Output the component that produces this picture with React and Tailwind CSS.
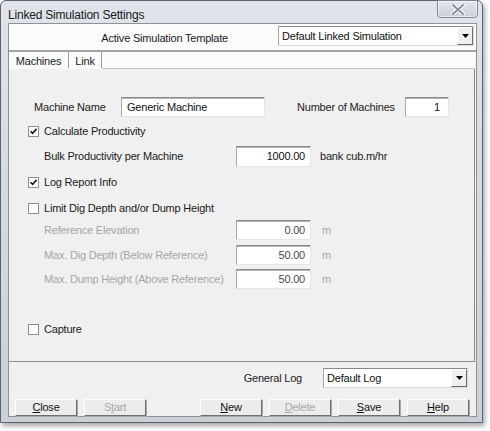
import React from "react";

const font = { fontFamily: '"Liberation Sans", Arial, sans-serif' };

function CheckBox({ checked, label }) {
  return (
    <div className="flex items-center h-full">
      <div className="w-[11px] h-[11px] bg-white border border-[#8e8f8f] flex items-center justify-center">
        {checked && (
          <svg width="7" height="7" viewBox="0 0 7 7">
            <path d="M0.5 3.2 L2.6 5.4 L6.5 0.8" fill="none" stroke="#111" strokeWidth="1.6" />
          </svg>
        )}
      </div>
      <span className="ml-[5px] text-[#1b1b1b]">{label}</span>
    </div>
  );
}

function Field({ value, w, h = 20, right, disabled, pad = 5 }) {
  return (
    <div
      className={`flex items-center bg-white border border-t-[#8a8a8a] border-l-[#a9a9a9] border-r-[#e6e6e6] border-b-[#e6e6e6] shadow-[inset_0_1px_0_#b4b4b4] ${
        right ? "justify-end" : "justify-start"
      } ${disabled ? "text-[#4a4a4a]" : "text-[#111]"}`}
      style={{ width: w, height: h, paddingLeft: pad, paddingRight: pad }}
    >
      {value}
    </div>
  );
}

function Combo({ value, w }) {
  return (
    <div
      className="flex items-center bg-white border border-t-[#8a8a8a] border-l-[#a9a9a9] border-r-[#dadada] border-b-[#dadada] h-[20px]"
      style={{ width: w }}
    >
      <span className="flex-1 pl-[3px] text-[#111]">{value}</span>
      <div className="w-[16px] h-[18px] bg-[#f0f0f0] border border-t-white border-l-white border-r-[#6d6d6d] border-b-[#6d6d6d] flex items-center justify-center">
        <svg width="7" height="4" viewBox="0 0 7 4">
          <path d="M0 0 H7 L3.5 4 Z" fill="#000" />
        </svg>
      </div>
    </div>
  );
}

function Btn({ children, disabled }) {
  return (
    <div
      className={`w-[62px] h-[17px] flex items-center justify-center bg-[#ececec] border border-t-white border-l-white border-r-[#6f6f6f] border-b-[#6f6f6f] shadow-[1px_1px_0_#a8a8a8] ${
        disabled ? "text-[#a8a8a8]" : "text-[#111]"
      }`}
    >
      {children}
    </div>
  );
}

export default function App() {
  return (
    <div className="w-[490px] h-[431px] bg-white text-[11px] tracking-[-0.2px] leading-none" style={font}>
      <div className="w-[483px] h-[423px] flex flex-col border border-[#5d6269] rounded-t-[6px] bg-gradient-to-b from-[#dfe4ea] to-[#c9d0d8] shadow-[2px_3px_5px_rgba(0,0,0,0.35)]">
        {/* title bar */}
        <div className="h-[24px] flex items-start justify-between">
          <span className="mt-[8px] ml-[7px] text-[#1a1a1a] text-[12px]">Linked Simulation Settings</span>
          <div className="w-[41px] h-[18px] mr-[4px] -mt-[1px] rounded-b-[4px] border border-[#7f8791] bg-gradient-to-b from-[#e3e7ec] to-[#c8cfd7] flex items-center justify-center shadow-[inset_0_0_0_1px_rgba(255,255,255,0.6)]">
            <svg width="14" height="11" viewBox="0 0 14 11">
              <path d="M2 1 L12 10 M12 1 L2 10" stroke="#ffffff" strokeWidth="4" strokeLinecap="round" />
              <path d="M2 1 L12 10 M12 1 L2 10" stroke="#8a9098" strokeWidth="2" strokeLinecap="round" />
            </svg>
          </div>
        </div>

        {/* client area */}
        <div className="flex-1 pl-[7px] pr-[5px] pb-[5px] flex">
          <div className="flex-1 flex flex-col border border-[#8c9298] bg-[#f0f0f0]">
            {/* template row */}
            <div className="h-[26px] flex items-start bg-[#fbfbfb]">
              <span className="w-[219px] mt-[9px] text-right text-[#1b1b1b]">Active Simulation Template</span>
              <div className="ml-[50px] mt-[2px]">
                <Combo value="Default Linked Simulation" w={196} />
              </div>
            </div>
            <div className="h-[2px] bg-[#a3a3a3]" />

            {/* tabs */}
            <div className="h-[17px] flex items-end bg-[#fbfbfb]">
              <div className="w-[60px] h-[16px] mb-[1px] pt-[3px] flex items-center justify-center border-r border-[#9c9c9c] text-[#1b1b1b]">
                Machines
              </div>
              <div className="w-[33px] h-[16px] mb-[1px] pt-[3px] flex items-center justify-center border-r border-[#9c9c9c] text-[#1b1b1b]">
                Link
              </div>
              <div className="flex-1 h-[1px] bg-[#c4c4c4] mr-[1px]" />
            </div>

            {/* panel */}
            <div className="h-[293px] mr-[1px] border-r border-b border-[#8d8d8d] bg-[#f0f0f0] flex flex-col pt-[28px]">
              <div className="h-[20px] flex items-center pl-[25px]">
                <span className="w-[87px] text-[#1b1b1b]">Machine Name</span>
                <Field value="Generic Machine" w={144} />
                <span className="ml-[32px] w-[108px] text-[#1b1b1b]">Number of Machines</span>
                <Field value="1" w={44} right pad={8} />
              </div>
              <div className="h-[29px] pl-[19px]">
                <CheckBox checked label="Calculate Productivity" />
              </div>
              <div className="h-[21px] flex items-center pl-[35px]">
                <span className="w-[192px] text-[#1b1b1b]">Bulk Productivity per Machine</span>
                <Field value="1000.00" w={75} h={21} right />
                <span className="ml-[9px] text-[#1b1b1b]">bank cub.m/hr</span>
              </div>
              <div className="h-[30px] pl-[19px]">
                <CheckBox checked label="Log Report Info" />
              </div>
              <div className="h-[23px] pl-[19px]">
                <CheckBox label="Limit Dig Depth and/or Dump Height" />
              </div>
              {[
                ["Reference Elevation", "0.00", 0],
                ["Max. Dig Depth (Below Reference)", "50.00", 5],
                ["Max. Dump Height (Above Reference)", "50.00", 4],
              ].map(([label, val, mt]) => (
                <div key={label} className="h-[20px] flex items-center pl-[35px]" style={{ marginTop: mt }}>
                  <span className="w-[192px] text-[#a6a6a6]">{label}</span>
                  <Field value={val} w={75} right disabled />
                  <span className="ml-[11px] text-[#a6a6a6]">m</span>
                </div>
              ))}
              <div className="h-[20px] mt-[30px] pl-[19px]">
                <CheckBox label="Capture" />
              </div>
            </div>

            {/* bottom */}
            <div className="flex items-center justify-end pt-[6px] pr-[8px]">
              <span className="text-[#1b1b1b]">General Log</span>
              <div className="ml-[21px]">
                <Combo value="Default Log" w={145} />
              </div>
            </div>
            <div className="flex items-center mt-[11px] pl-[6px]">
              <Btn>
                <span className="underline">C</span>lose
              </Btn>
              <div className="ml-[7px]">
                <Btn disabled>
                  S<span className="underline">t</span>art
                </Btn>
              </div>
              <div className="ml-[54px]">
                <Btn>
                  <span className="underline">N</span>ew
                </Btn>
              </div>
              <div className="ml-[7px]">
                <Btn disabled>
                  <span className="underline">D</span>elete
                </Btn>
              </div>
              <div className="ml-[7px]">
                <Btn>
                  <span className="underline">S</span>ave
                </Btn>
              </div>
              <div className="ml-[7px]">
                <Btn>
                  <span className="underline">H</span>elp
                </Btn>
              </div>
            </div>
          </div>
        </div>
      </div>
    </div>
  );
}
